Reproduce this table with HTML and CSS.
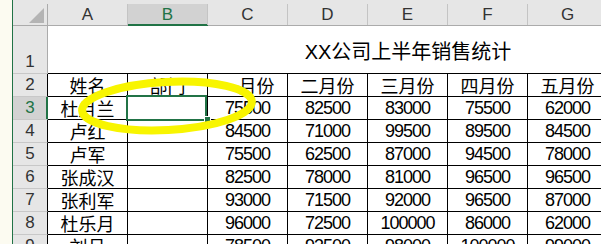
FILE: index.html
```html
<!DOCTYPE html>
<html lang="zh">
<head>
<meta charset="utf-8">
<link rel="stylesheet" href="styles.css">
</head>
<body>
<div class="app">
  <div class="strip"></div>
  <div class="sheet">
    <div class="grid">
      <div class="ch corner"><div class="lab"><svg class="tri" width="34" height="21" viewBox="0 0 34 21"><polygon points="31,19 31,4 16,19" fill="#b4b4b4"/></svg></div></div>
      <div class="ch"><div class="lab">A</div></div>
      <div class="ch sel"><div class="lab">B</div></div>
      <div class="ch"><div class="lab">C</div></div>
      <div class="ch"><div class="lab">D</div></div>
      <div class="ch"><div class="lab">E</div></div>
      <div class="ch"><div class="lab">F</div></div>
      <div class="ch"><div class="lab">G</div></div>
      <div class="ch"><div class="lab"></div></div>
      <div class="ch"><div class="lab"></div></div>

      <div class="rh first">1</div>
      <div class="title">XX公司上半年销售统计</div>

      <div class="rh">2</div>
      <div class="c">姓名</div><div class="c">部门</div><div class="c">一月份</div><div class="c">二月份</div><div class="c">三月份</div><div class="c">四月份</div><div class="c">五月份</div><div class="c"></div><div class="c"></div>

      <div class="rh selrow">3</div>
      <div class="c">杜月兰</div><div class="c"></div><div class="c n">75500</div><div class="c n">82500</div><div class="c n">83000</div><div class="c n">75500</div><div class="c n">62000</div><div class="c"></div><div class="c"></div>

      <div class="rh">4</div>
      <div class="c">卢红</div><div class="c"></div><div class="c n">84500</div><div class="c n">71000</div><div class="c n">99500</div><div class="c n">89500</div><div class="c n">84500</div><div class="c"></div><div class="c"></div>

      <div class="rh">5</div>
      <div class="c">卢军</div><div class="c"></div><div class="c n">75500</div><div class="c n">62500</div><div class="c n">87000</div><div class="c n">94500</div><div class="c n">78000</div><div class="c"></div><div class="c"></div>

      <div class="rh">6</div>
      <div class="c">张成汉</div><div class="c"></div><div class="c n">82500</div><div class="c n">78000</div><div class="c n">81000</div><div class="c n">96500</div><div class="c n">96500</div><div class="c"></div><div class="c"></div>

      <div class="rh">7</div>
      <div class="c">张利军</div><div class="c"></div><div class="c n">93000</div><div class="c n">71500</div><div class="c n">92000</div><div class="c n">96500</div><div class="c n">87000</div><div class="c"></div><div class="c"></div>

      <div class="rh">8</div>
      <div class="c">杜乐月</div><div class="c"></div><div class="c n">96000</div><div class="c n">72500</div><div class="c n">100000</div><div class="c n">86000</div><div class="c n">62000</div><div class="c"></div><div class="c"></div>

      <div class="rh">9</div>
      <div class="c">刘月</div><div class="c"></div><div class="c n">78500</div><div class="c n">93500</div><div class="c n">98000</div><div class="c n">100000</div><div class="c n">99000</div><div class="c"></div><div class="c"></div>
    </div>

    <div class="selbox"></div>
    <div class="handle"></div>
    <svg class="mark" width="601" height="244" viewBox="0 0 601 244">
      <ellipse cx="167" cy="106" rx="85" ry="24" transform="rotate(-3 167 106)" fill="none" stroke="#f8f500" stroke-width="8"/>
    </svg>
  </div>
</div>
</body>
</html>
```

FILE: styles.css
```css
html, body {
  margin: 0;
  padding: 0;
  background: #ffffff;
}

.app {
  width: 601px;
  height: 244px;
  overflow: hidden;
  display: flex;
  font-family: "Liberation Sans", "Noto Sans CJK SC", sans-serif;
  color: #000;
}

.strip {
  flex: 0 0 12px;
  background: #fcfbf1;
  border-right: 1px solid #217346;
}

.sheet {
  position: relative;
  flex: 1 1 auto;
}

.grid {
  display: grid;
  grid-template-columns: 35px repeat(9, 80px);
  grid-template-rows: 26px 48px repeat(8, 23px);
}

.ch {
  box-sizing: border-box;
  height: 26px;
  padding-top: 4px;
  background: #e6e6e6;
  border-bottom: 1px solid #ababab;
}

.ch .lab {
  box-sizing: border-box;
  height: 21px;
  border-right: 1px solid #c4c4c4;
  display: flex;
  align-items: center;
  justify-content: center;
  font-size: 17px;
  color: #333;
}

.corner .lab {
  border-right-color: #ababab;
  display: block;
}

.tri {
  display: block;
}

.ch.sel {
  border-bottom-color: #217346;
}

.ch.sel .lab {
  background: #d2d2d2;
  color: #217346;
  box-shadow: inset 0 -1px 0 #217346;
}

.rh {
  box-sizing: border-box;
  background: #e6e6e6;
  border-right: 1px solid #000;
  border-bottom: 1px solid #c8c8c8;
  display: flex;
  align-items: center;
  justify-content: center;
  font-size: 17px;
  color: #333;
}

.rh.first {
  align-items: flex-end;
  padding-bottom: 1px;
  border-right-color: #ababab;
}

.rh.selrow {
  background: #d2d2d2;
  color: #217346;
  border-right-color: #217346;
  box-shadow: inset -1px 0 0 #217346;
}

.title {
  grid-column: span 9;
  box-sizing: border-box;
  border-bottom: 1px solid #000;
  display: flex;
  align-items: center;
  justify-content: center;
  font-size: 20px;
  padding-top: 2px;
}

.c {
  box-sizing: border-box;
  border-right: 1px solid #000;
  border-bottom: 1px solid #000;
  display: flex;
  align-items: center;
  justify-content: center;
  font-size: 18px;
  white-space: nowrap;
  overflow: hidden;
}

.c.n {
  letter-spacing: -1px;
}

.selbox {
  position: absolute;
  left: 113px;
  top: 95px;
  width: 81px;
  height: 26px;
  box-sizing: border-box;
  border: 2px solid #217346;
}

.handle {
  position: absolute;
  left: 192px;
  top: 117px;
  width: 5px;
  height: 5px;
  background: #217346;
  outline: 1px solid #ffffff;
}

.mark {
  position: absolute;
  left: -13px;
  top: 0;
  pointer-events: none;
}
```
